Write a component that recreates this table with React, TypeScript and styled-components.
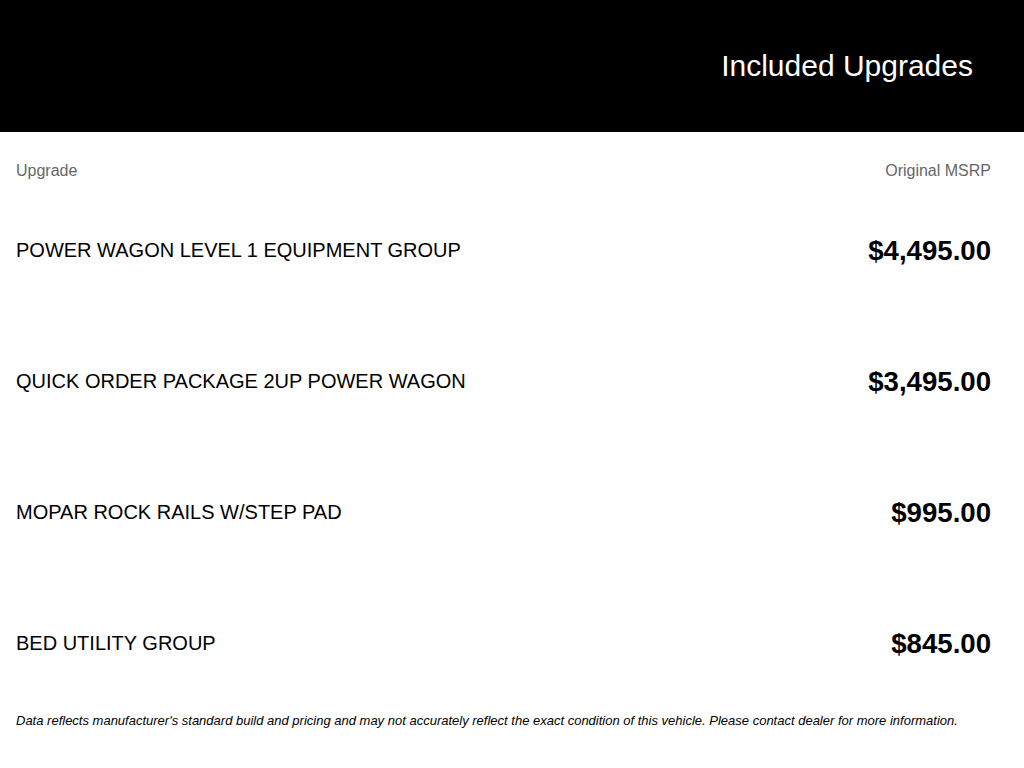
import React from 'react'
import styled, { createGlobalStyle } from 'styled-components'

const GlobalStyle = createGlobalStyle`
  body {
    margin: 0;
    background: #fff;
    font-family: "Liberation Sans", Arial, sans-serif;
  }
`

const Header = styled.header`
  height: 132px;
  background: #000;
  display: flex;
  align-items: center;
  justify-content: flex-end;
  padding-right: 51px;
`
const Title = styled.h1`
  margin: 0;
  color: #fff;
  font-size: 30px;
  font-weight: 400;
  line-height: 1;
`
const Content = styled.main`
  padding: 0 33px 0 16px;
`
const ColumnHeads = styled.div`
  display: flex;
  justify-content: space-between;
  padding-top: 30px;
  margin-bottom: 5px;
  font-size: 16px;
  line-height: 18px;
  color: #666;
`
const Row = styled.div`
  height: 131px;
  display: flex;
  align-items: center;
  justify-content: space-between;
`
const Name = styled.span`
  font-size: 20px;
  color: #000;
`
const Price = styled.span`
  font-size: 27.6px;
  font-weight: 700;
  color: #000;
`
const Disclaimer = styled.p`
  margin: 4px 0 0;
  font-size: 13px;
  line-height: 15px;
  font-style: italic;
  color: #000;
`

const upgrades = [
  { name: 'POWER WAGON LEVEL 1 EQUIPMENT GROUP', price: '$4,495.00' },
  { name: 'QUICK ORDER PACKAGE 2UP POWER WAGON', price: '$3,495.00' },
  { name: 'MOPAR ROCK RAILS W/STEP PAD', price: '$995.00' },
  { name: 'BED UTILITY GROUP', price: '$845.00' },
]

const App = (): React.ReactElement => (
  <>
    <GlobalStyle />
    <Header>
      <Title>Included Upgrades</Title>
    </Header>
    <Content>
      <ColumnHeads>
        <span>Upgrade</span>
        <span>Original MSRP</span>
      </ColumnHeads>
      {upgrades.map((u) => (
        <Row key={u.name}>
          <Name>{u.name}</Name>
          <Price>{u.price}</Price>
        </Row>
      ))}
      <Disclaimer>
        Data reflects manufacturer's standard build and pricing and may not accurately reflect the exact
        condition of this vehicle. Please contact dealer for more information.
      </Disclaimer>
    </Content>
  </>
)

export default App
